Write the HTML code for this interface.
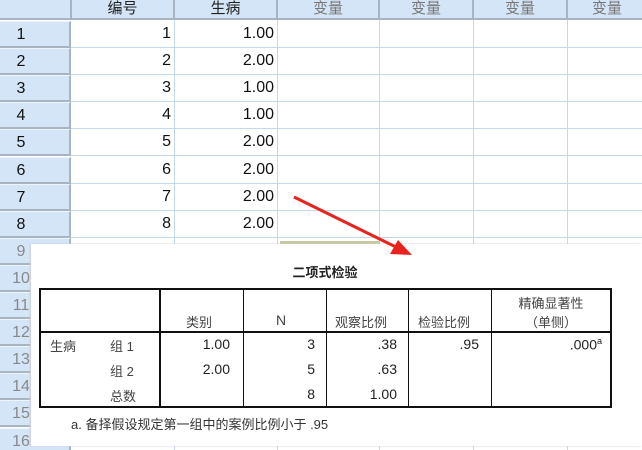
<!DOCTYPE html>
<html style="width:642px;height:450px;overflow:hidden"><head><meta charset="utf-8"><style>
*{margin:0;padding:0;box-sizing:border-box}
body{width:642px;height:450px;overflow:hidden;background:#fff;position:relative;font-family:"Liberation Sans","Noto Sans CJK SC",sans-serif;}
.c{position:absolute;}
.rh{position:absolute;left:0;width:71px;background:#d5e5f8;border-right:2px solid #a9b4c2;border-bottom:2px solid #a9b4c2;border-top:1px solid #eef4fb;font-size:16px;color:#111;}
.rh span{display:block;width:42px;text-align:center;}
.ch{position:absolute;top:0;height:20px;background:#d5e5f8;border-right:2px solid #a9b4c2;border-bottom:2px solid #a9b4c2;text-align:center;font-size:15px;color:#222;line-height:18px;}
.vl{position:absolute;top:20px;width:1px;height:430px;background:#c3d7ee;}
.hl{position:absolute;left:71px;width:571px;height:1px;background:#c3d7ee;}
.num{position:absolute;text-align:right;font-size:16px;color:#111;}
.t{position:absolute;font-size:13px;color:#444;}
.tr{position:absolute;font-size:14px;color:#222;text-align:right;}
</style></head><body>
<div class="ch" style="left:0;width:72px;"></div>
<div class="ch" style="left:72px;width:103px;">编号</div>
<div class="ch" style="left:175px;width:103px;">生病</div>
<div class="ch" style="left:278px;width:102px;color:#777">变量</div>
<div class="ch" style="left:380px;width:94px;color:#777">变量</div>
<div class="ch" style="left:474px;width:94px;color:#777">变量</div>
<div class="ch" style="left:568px;width:80px;color:#777">变量</div>
<div class="vl" style="left:174px"></div><div class="vl" style="left:277px"></div><div class="vl" style="left:379px"></div><div class="vl" style="left:473px"></div><div class="vl" style="left:567px"></div>
<div id="rows"></div>
<script>
var v2=["1.00","2.00","1.00","1.00","2.00","2.00","2.00","2.00"];var h="";
for(var i=0;i<16;i++){var y=21+27.1*i;
h+='<div class="rh" style="top:'+y+'px;height:27px;line-height:25px;'+(i>=8?'color:#888':'')+'"><span>'+(i+1)+'</span></div>';
h+='<div class="hl" style="top:'+(y+26)+'px"></div>';
if(i<8){h+='<div class="num" style="left:72px;width:99px;top:'+(y+4)+'px">'+(i+1)+'</div><div class="num" style="left:175px;width:99px;top:'+(y+4)+'px">'+v2[i]+'</div>';}}
document.getElementById("rows").innerHTML=h;
</script>
<div class="c" style="left:280px;top:241px;width:100px;height:3px;background:#c8c99a"></div>
<div class="c" style="left:31px;top:244px;width:611px;height:202px;background:#fff;box-shadow:-1px 0 2px #ccd"></div>
<div class="c" style="left:31px;top:262px;width:588px;text-align:center;font-size:13px;font-weight:bold;color:#222">二项式检验</div>
<div class="c" style="left:39px;top:288px;width:573px;height:120px;border:2px solid #111"></div>
<div class="c" style="left:39px;top:331px;width:573px;height:2px;background:#111"></div>
<div class="c" style="left:159px;top:288px;width:2px;height:120px;background:#111"></div>
<div class="c" style="left:243px;top:288px;width:1px;height:120px;background:#111"></div>
<div class="c" style="left:326px;top:288px;width:1px;height:120px;background:#111"></div>
<div class="c" style="left:408px;top:288px;width:1px;height:120px;background:#111"></div>
<div class="c" style="left:491px;top:288px;width:1px;height:120px;background:#111"></div>
<div class="t" style="left:186px;top:312px">类别</div>
<div class="t" style="left:276px;top:312px;font-size:14px">N</div>
<div class="t" style="left:335px;top:312px">观察比例</div>
<div class="t" style="left:418px;top:312px">检验比例</div>
<div class="t" style="left:491px;top:293px;width:120px;text-align:center">精确显著性<br>（单侧）</div>
<div class="t" style="left:50px;top:336px">生病</div>
<div class="t" style="left:110px;top:336px">组 1</div>
<div class="t" style="left:110px;top:361px">组 2</div>
<div class="t" style="left:110px;top:386px">总数</div>
<div class="tr" style="left:161px;width:69px;top:336px">1.00</div>
<div class="tr" style="left:161px;width:69px;top:361px">2.00</div>
<div class="tr" style="left:244px;width:71px;top:336px">3</div>
<div class="tr" style="left:244px;width:71px;top:361px">5</div>
<div class="tr" style="left:244px;width:71px;top:386px">8</div>
<div class="tr" style="left:327px;width:70px;top:336px">.38</div>
<div class="tr" style="left:327px;width:70px;top:361px">.63</div>
<div class="tr" style="left:327px;width:70px;top:386px">1.00</div>
<div class="tr" style="left:409px;width:70px;top:336px">.95</div>
<div class="tr" style="left:492px;width:110px;top:336px">.000<sup style="font-size:9px">a</sup></div>
<div class="t" style="left:71px;top:414px;font-size:13px;color:#333">a. 备择假设规定第一组中的案例比例小于 .95</div>
<svg class="c" style="left:0;top:0" width="642" height="450"><line x1="294" y1="197" x2="398" y2="248" stroke="#e8231f" stroke-width="3"/><polygon points="412,255 390,254 398,240" fill="#e8231f"/></svg>
</body></html>
